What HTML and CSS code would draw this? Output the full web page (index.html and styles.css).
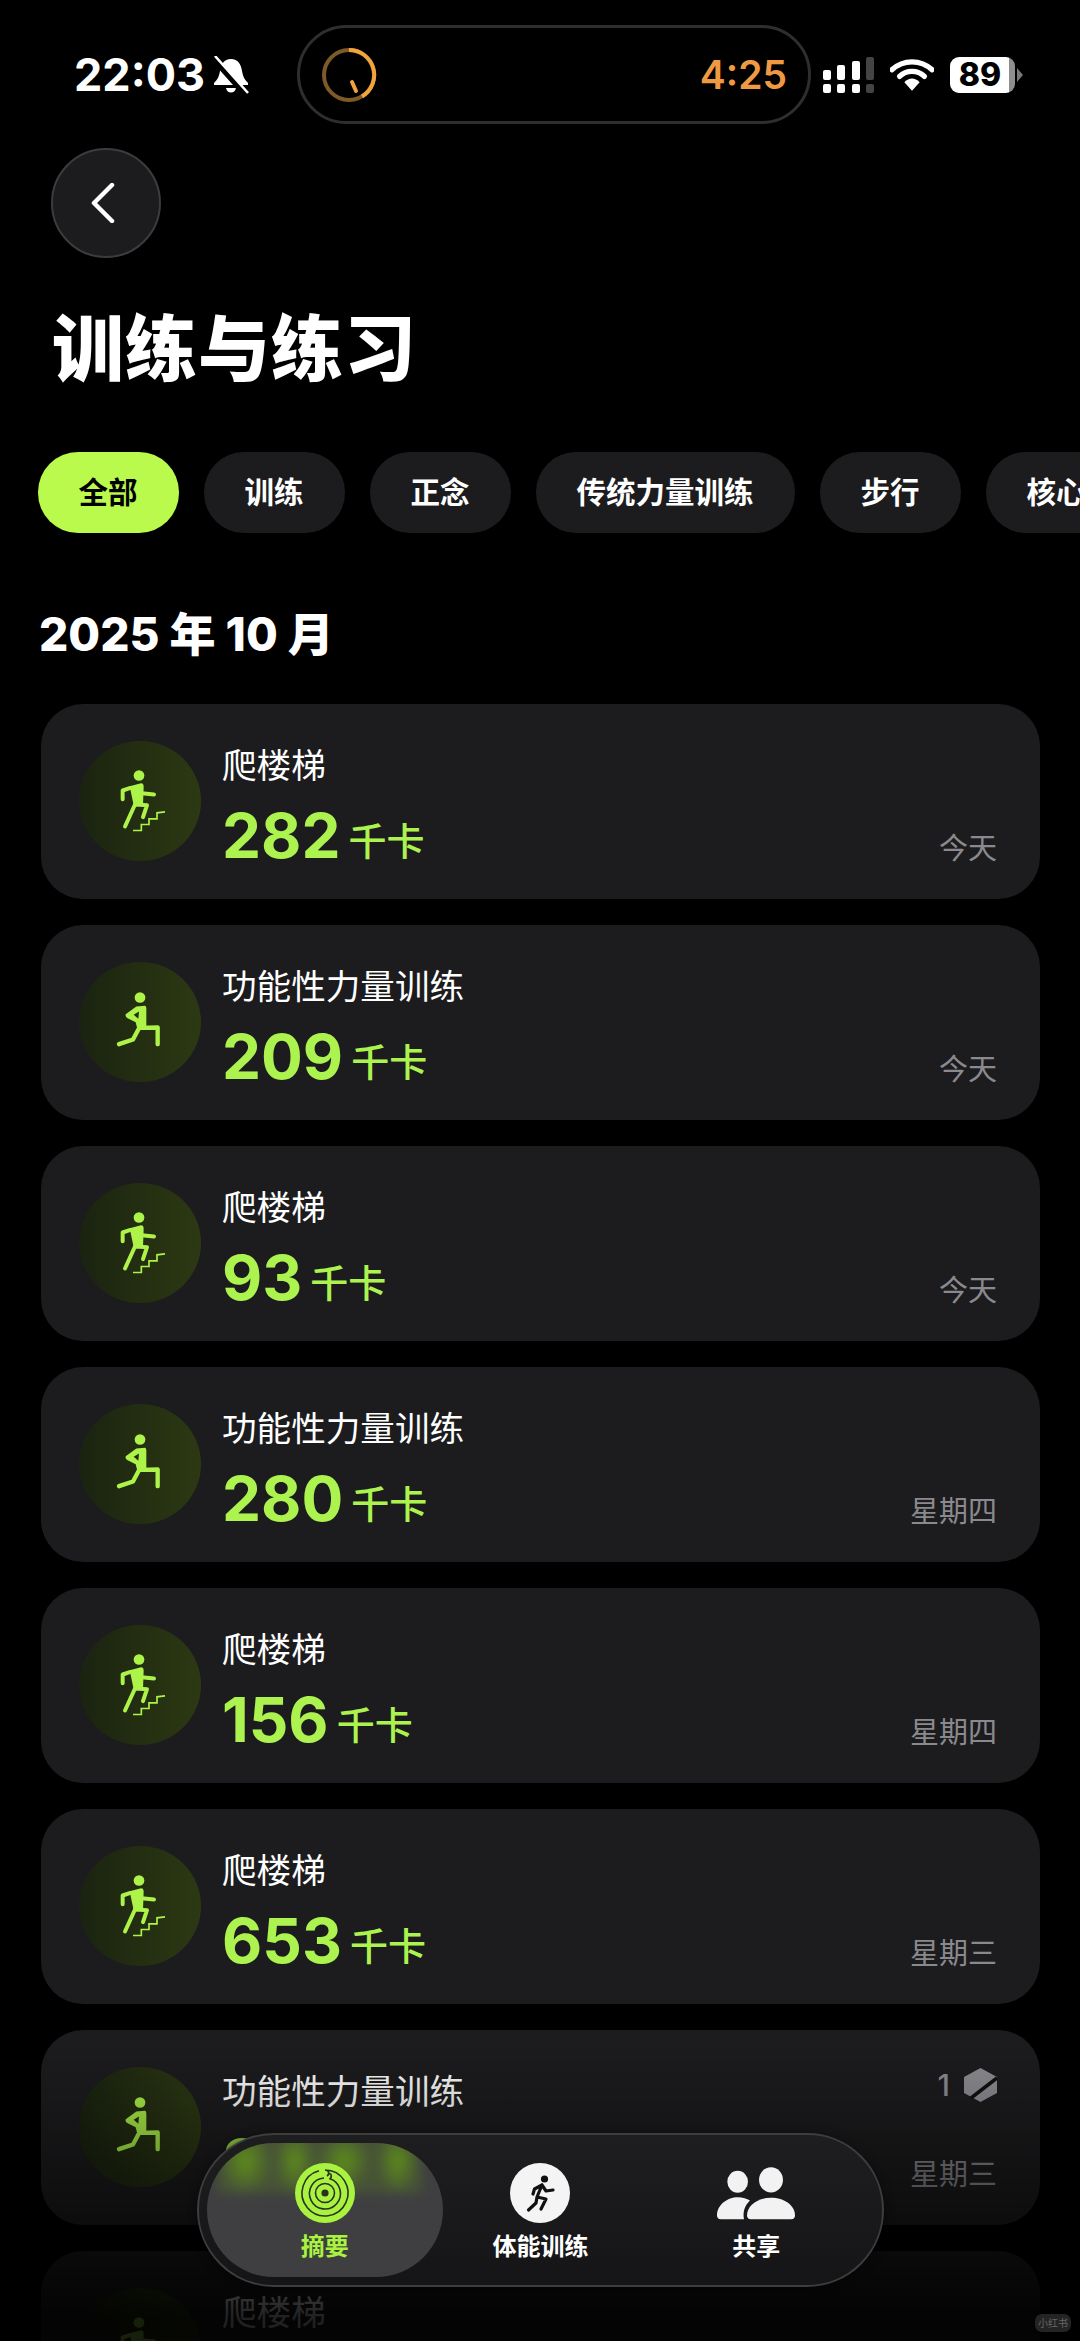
FILE: index.html
```html
<!DOCTYPE html>
<html lang="zh">
<head>
  <meta charset="utf-8">
  <title>训练与练习</title>
  <link rel="stylesheet" href="styles.css">
</head>
<body>
  <svg class="sprite" width="0" height="0">
    <symbol id="icon-stairs" viewBox="168 143 150 200">
      <circle cx="240" cy="165" r="16" fill="currentColor"/>
      <path d="M212 197 L246 188 Q254 188 254 198 L252 254 L224 254 Z" fill="currentColor"/>
      <path d="M212 203 L191 210 L191 236 M248 218 L285 222 M232 252 L264 254 L252 290 M228 252 L198 318" fill="none" stroke="currentColor" stroke-width="12" stroke-linecap="round" stroke-linejoin="round"/>
      <path d="M222 330 H247 V312 H270 V295 H294 V277 L320 274" fill="none" stroke="currentColor" stroke-width="5"/>
    </symbol>
    <symbol id="icon-lunge" viewBox="168 147 150 200">
      <circle cx="243" cy="172" r="16" fill="currentColor"/>
      <path fill-rule="evenodd" d="M258 197 L232 199 L200 222 Q198 230 206 234 L230 246 L236 270 L262 262 L262 205 Q262 197 258 197 Z M224 224 L240 214 L238 236 Z" fill="currentColor"/>
      <path d="M246 263 L296 262 L296 312 M238 268 L222 298 L180 312" fill="none" stroke="currentColor" stroke-width="13" stroke-linecap="round" stroke-linejoin="round"/>
    </symbol>
  </svg>

  <div class="page">
    <div class="status-bar">
      <div class="status-left">
        <span class="clock">22:03</span>
        <svg class="bell" viewBox="0 0 36 38">
          <path d="M18 3 C11 3 8 8 7 15 C6 21 4 24 1 27 V29 H35 V27 C32 24 30 21 29 15 C28 8 25 3 18 3 Z" fill="#fff"/>
          <path d="M13 32 H23 C22 38 14 38 13 32 Z" fill="#fff"/>
          <path d="M0 2 L32 38" stroke="#000" stroke-width="6"/>
          <path d="M2 0 L35 37" stroke="#fff" stroke-width="2.6"/>
        </svg>
      </div>
      <div class="island">
        <svg class="timer" viewBox="0 0 56 56">
          <circle cx="28" cy="28" r="25" fill="none" stroke="#7d5a28" stroke-width="4"/>
          <path d="M28 3 A25 25 0 0 1 41 49.5" fill="none" stroke="#f0a53c" stroke-width="4"/>
          <path d="M31 35 L35 44" stroke="#f0a53c" stroke-width="4" stroke-linecap="round"/>
        </svg>
        <span class="timer-text">4:25</span>
      </div>
      <div class="status-right">
        <svg class="signal" viewBox="0 0 52 36">
          <rect x="0" y="13" width="8" height="10" rx="2" fill="#fff"/>
          <rect x="14" y="8" width="8" height="15" rx="2" fill="#fff"/>
          <rect x="29" y="4" width="8" height="19" rx="2" fill="#fff"/>
          <rect x="43" y="0" width="8" height="23" rx="2" fill="#444"/>
          <rect x="0" y="27" width="8" height="9" rx="2" fill="#fff"/>
          <rect x="14" y="27" width="8" height="9" rx="2" fill="#fff"/>
          <rect x="29" y="27" width="8" height="9" rx="2" fill="#fff"/>
          <rect x="43" y="27" width="8" height="9" rx="2" fill="#444"/>
        </svg>
        <svg class="wifi" viewBox="0 0 46 33">
          <path d="M2 11 C14 0 32 0 44 11" fill="none" stroke="#fff" stroke-width="5.5" stroke-linecap="round"/>
          <path d="M10 18 C17 11 29 11 36 18" fill="none" stroke="#fff" stroke-width="5.5" stroke-linecap="round"/>
          <path d="M15 24 C20 19 26 19 31 24 L23 33 Z" fill="#fff"/>
        </svg>
        <div class="battery"><span class="battery-level">89</span></div>
        <span class="battery-nub"></span>
      </div>
    </div>

    <button class="back-btn">
      <svg viewBox="0 0 24 40" width="24" height="40"><path d="M21 2 L3 20 L21 38" fill="none" stroke="#fff" stroke-width="4.5" stroke-linecap="round" stroke-linejoin="round"/></svg>
    </button>

    <h1 class="page-title">训练与练习</h1>

    <div class="chips">
      <span class="chip active">全部</span>
      <span class="chip">训练</span>
      <span class="chip">正念</span>
      <span class="chip">传统力量训练</span>
      <span class="chip">步行</span>
      <span class="chip">核心训练</span>
    </div>

    <h2 class="month">2025 年 10 月</h2>

    <div class="workout-list">
      <div class="workout-card">
        <div class="workout-icon"><svg class="stairs"><use href="#icon-stairs"/></svg></div>
        <div class="workout-info">
          <div class="workout-name">爬楼梯</div>
          <div class="workout-value"><span class="kcal">282</span><span class="unit">千卡</span></div>
        </div>
        <div class="workout-date">今天</div>
      </div>
      <div class="workout-card">
        <div class="workout-icon"><svg class="lunge"><use href="#icon-lunge"/></svg></div>
        <div class="workout-info">
          <div class="workout-name">功能性力量训练</div>
          <div class="workout-value"><span class="kcal">209</span><span class="unit">千卡</span></div>
        </div>
        <div class="workout-date">今天</div>
      </div>
      <div class="workout-card">
        <div class="workout-icon"><svg class="stairs"><use href="#icon-stairs"/></svg></div>
        <div class="workout-info">
          <div class="workout-name">爬楼梯</div>
          <div class="workout-value"><span class="kcal">93</span><span class="unit">千卡</span></div>
        </div>
        <div class="workout-date">今天</div>
      </div>
      <div class="workout-card">
        <div class="workout-icon"><svg class="lunge"><use href="#icon-lunge"/></svg></div>
        <div class="workout-info">
          <div class="workout-name">功能性力量训练</div>
          <div class="workout-value"><span class="kcal">280</span><span class="unit">千卡</span></div>
        </div>
        <div class="workout-date">星期四</div>
      </div>
      <div class="workout-card">
        <div class="workout-icon"><svg class="stairs"><use href="#icon-stairs"/></svg></div>
        <div class="workout-info">
          <div class="workout-name">爬楼梯</div>
          <div class="workout-value"><span class="kcal">156</span><span class="unit">千卡</span></div>
        </div>
        <div class="workout-date">星期四</div>
      </div>
      <div class="workout-card">
        <div class="workout-icon"><svg class="stairs"><use href="#icon-stairs"/></svg></div>
        <div class="workout-info">
          <div class="workout-name">爬楼梯</div>
          <div class="workout-value"><span class="kcal">653</span><span class="unit">千卡</span></div>
        </div>
        <div class="workout-date">星期三</div>
      </div>
      <div class="workout-card">
        <div class="workout-icon"><svg class="lunge"><use href="#icon-lunge"/></svg></div>
        <div class="workout-info">
          <div class="workout-name">功能性力量训练</div>
          <div class="workout-value"><span class="kcal">318</span><span class="unit">千卡</span></div>
        </div>
        <div class="workout-badge">
          <span>1</span>
          <svg viewBox="0 0 33 34" width="33" height="34">
            <path d="M16.5 0 L33 9 V25 L16.5 34 L0 25 V9 Z" fill="#8e8e93"/>
            <path d="M7 30 L33 10" stroke="#111" stroke-width="3.5"/>
          </svg>
        </div>
        <div class="workout-date">星期三</div>
      </div>
      <div class="workout-card">
        <div class="workout-icon"><svg class="stairs"><use href="#icon-stairs"/></svg></div>
        <div class="workout-info">
          <div class="workout-name">爬楼梯</div>
        </div>
      </div>
    </div>

    <div class="bottom-fade"></div>

    <nav class="tab-bar">
      <div class="tab-item selected">
        <span class="tab-smear"></span>
        <svg class="tab-icon" viewBox="0 0 60 60">
          <circle cx="30" cy="30" r="30" fill="#a9f23f"/>
          <path d="M30 7 A23 23 0 1 1 24 7.8 M30 7 C34 7 35 11 32 13" fill="none" stroke="#2b3320" stroke-width="1.6"/>
          <path d="M29 15 A15.5 15.5 0 1 0 35 15.8 C38 12 35 9 33 12" fill="none" stroke="#2b3320" stroke-width="1.6"/>
          <circle cx="30" cy="30" r="9.5" fill="none" stroke="#2b3320" stroke-width="1.6"/>
          <circle cx="30" cy="30" r="3.6" fill="#2b3320"/>
        </svg>
        <span class="tab-label">摘要</span>
      </div>
      <div class="tab-item workout">
        <svg class="tab-icon" viewBox="0 0 60 60">
          <circle cx="30" cy="30" r="30" fill="#f4f4f4"/>
          <circle cx="34.5" cy="16" r="3.6" fill="#111"/>
          <path d="M32 22 L27 34 M32 22 L24.5 26 L23 31 M32 22 L36 28 L43 27 M27 34 L36 36 L31 46 M27 34 L26 40 L18.5 47" fill="none" stroke="#111" stroke-width="3.2" stroke-linecap="round" stroke-linejoin="round"/>
        </svg>
        <span class="tab-label">体能训练</span>
      </div>
      <div class="tab-item sharing">
        <svg class="people-icon" viewBox="318 140 234 158">
          <ellipse cx="380" cy="184" rx="31" ry="33" fill="#f2f2f2"/>
          <ellipse cx="480" cy="178" rx="36" ry="38" fill="#f2f2f2"/>
          <path d="M318 285 C318 252 350 230 380 230 C395 230 408 234 417 240 C401 255 395 275 399 296 L330 296 Q318 296 318 285 Z" fill="#f2f2f2"/>
          <path d="M408 285 C408 255 440 232 480 232 C520 232 552 255 552 285 Q552 296 540 296 L420 296 Q408 296 408 285 Z" fill="#f2f2f2"/>
        </svg>
        <span class="tab-label">共享</span>
      </div>
    </nav>

    <div class="watermark">小红书</div>
  </div>
</body>
</html>
```

FILE: styles.css
```css
* {
  box-sizing: border-box;
}
html, body {
  margin: 0;
  padding: 0;
  background-color: #000;
}
body {
  font-family: Inter, "Noto Sans CJK SC", sans-serif;
  color: #fff;
}
.sprite {
  position: absolute;
}
.page {
  position: relative;
  width: 1080px;
  height: 2341px;
  overflow: hidden;
  background-color: #000;
}

/* status bar */
.status-bar {
  display: flex;
  align-items: center;
  height: 124px;
  padding-top: 25px;
}
.status-left {
  display: flex;
  align-items: center;
  width: 297px;
  padding-left: 74px;
}
.clock {
  font-size: 45px;
  font-weight: 700;
  line-height: 1;
}
.bell {
  width: 36px;
  height: 38px;
  margin-left: 8px;
}
.island {
  display: flex;
  align-items: center;
  justify-content: space-between;
  width: 514px;
  height: 99px;
  padding: 0 21px 0 21px;
  border: 3px solid #2e2e2e;
  border-radius: 50px;
  background-color: #000;
}
.timer {
  width: 56px;
  height: 56px;
}
.timer-text {
  font-size: 39px;
  font-weight: 600;
  color: #ef9a43;
}
.status-right {
  display: flex;
  align-items: center;
  padding-left: 12px;
}
.signal {
  width: 52px;
  height: 36px;
}
.wifi {
  width: 44px;
  height: 32px;
  margin-left: 15px;
}
.battery {
  width: 65px;
  height: 36px;
  margin-left: 16px;
  border-radius: 9px;
  background: linear-gradient(90deg, #fff 90%, #8e8e8e 90%);
}
.battery-level {
  display: block;
  padding-right: 5px;
  font-size: 32px;
  font-weight: 800;
  line-height: 36px;
  text-align: center;
  color: #000;
}
.battery-nub {
  width: 0;
  height: 0;
  margin-left: 2px;
  border-top: 7px solid transparent;
  border-bottom: 7px solid transparent;
  border-left: 6px solid #777;
}

/* header */
.back-btn {
  display: flex;
  align-items: center;
  justify-content: center;
  width: 110px;
  height: 110px;
  margin: 24px 0 0 51px;
  padding: 0 7px 0 0;
  border: 2px solid #3c3c3e;
  border-radius: 50%;
  background-color: #1c1c1e;
}
.page-title {
  margin: 51px 0 0 52px;
  font-size: 72px;
  font-weight: 900;
  letter-spacing: 1px;
  line-height: 80px;
}
.chips {
  display: flex;
  gap: 25px;
  margin-top: 63px;
  padding-left: 37.5px;
  overflow: hidden;
}
.chip {
  flex-shrink: 0;
  height: 81px;
  padding: 0 41px;
  border-radius: 40px;
  background-color: #1c1c1e;
  font-size: 29.5px;
  font-weight: 700;
  line-height: 81px;
}
.chip.active {
  background-color: #b9fa4c;
  color: #000;
}
.month {
  margin: 73px 0 0 39px;
  font-size: 46px;
  font-weight: 800;
  line-height: 56px;
}

/* workout cards */
.workout-list {
  display: flex;
  flex-direction: column;
  gap: 26px;
  margin-top: 42px;
  padding: 0 40px 0 41px;
}
.workout-card {
  position: relative;
  display: flex;
  flex-shrink: 0;
  height: 195px;
  padding: 37px 43px 0 38px;
  border-radius: 42px;
  background-color: #1c1c1e;
}
.workout-icon {
  display: flex;
  align-items: center;
  justify-content: center;
  flex-shrink: 0;
  width: 122px;
  height: 120px;
  border-radius: 50%;
  background: linear-gradient(90deg, #1a2310, #2d3913);
  color: #adf34a;
}
.stairs,
.lunge {
  width: 50px;
  height: 67px;
}
.workout-info {
  flex: 1;
  margin-left: 21px;
}
.workout-name {
  margin-top: 4px;
  font-size: 34.6px;
  line-height: 40px;
}
.workout-value {
  display: flex;
  align-items: center;
  margin-top: 13px;
  line-height: 76px;
  color: #adf34f;
}
.kcal {
  font-size: 62px;
  font-weight: 700;
}
.unit {
  margin: 9px 0 0 8px;
  font-size: 38px;
  font-weight: 500;
  line-height: 50px;
}
.workout-date {
  position: absolute;
  right: 43px;
  bottom: 32px;
  font-size: 29px;
  line-height: 36px;
  color: #8a8a8e;
}
.workout-badge {
  position: absolute;
  top: 37px;
  right: 43px;
  display: flex;
  align-items: center;
  gap: 14px;
  font-size: 30px;
  font-weight: 500;
  color: #8e8e93;
}

/* bottom overlays */
.bottom-fade {
  position: absolute;
  left: 0;
  right: 0;
  bottom: 0;
  height: 301px;
  background: linear-gradient(180deg, rgba(0, 0, 0, 0), rgba(0, 0, 0, 0.15) 18%, rgba(0, 0, 0, 0.5) 56%, rgba(0, 0, 0, 0.87) 92%);
}
.tab-bar {
  position: absolute;
  left: 197px;
  top: 2133px;
  display: flex;
  width: 687px;
  height: 154px;
  padding: 8px 8px 8px 8px;
  border: 2px solid #3d3d3f;
  border-radius: 77px;
  background: linear-gradient(180deg, #1e1e20, #151517);
  box-shadow: 0 2px 10px rgba(0, 0, 0, 0.5);
}
.tab-item {
  position: relative;
  display: flex;
  flex-direction: column;
  align-items: center;
  justify-content: flex-start;
  width: 196px;
  padding-top: 20px;
}
.tab-item.selected {
  width: 236px;
  overflow: hidden;
  border-radius: 68px;
  background-color: #3f3f41;
  color: #a9f23f;
}
.tab-item.sharing {
  width: 236px;
  padding-top: 24px;
}
.tab-smear {
  position: absolute;
  left: 10px;
  top: -8px;
  width: 205px;
  height: 58px;
  background:
    radial-gradient(ellipse 26px 34px at 14% 45%, #5f901a, transparent),
    radial-gradient(ellipse 20px 34px at 38% 45%, #5f901a, transparent),
    radial-gradient(ellipse 26px 30px at 62% 45%, #5f901a, transparent),
    radial-gradient(ellipse 20px 34px at 88% 45%, #5f901a, transparent),
    rgba(90, 130, 30, 0.3);
  filter: blur(6px);
}
.tab-icon {
  position: relative;
  width: 60px;
  height: 60px;
}
.people-icon {
  width: 78px;
  height: 53px;
}
.tab-label {
  position: relative;
  margin-top: 8px;
  font-size: 24px;
  font-weight: 700;
  line-height: 32px;
}
.sharing .tab-label {
  margin-top: 11px;
}
.watermark {
  position: absolute;
  right: 9px;
  bottom: 9px;
  width: 36px;
  height: 18px;
  border-radius: 7px;
  background-color: #242424;
  font-size: 10px;
  line-height: 18px;
  text-align: center;
  color: #666;
}
```
